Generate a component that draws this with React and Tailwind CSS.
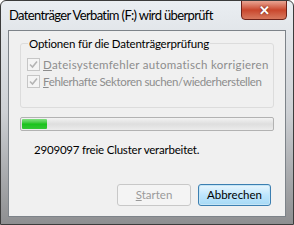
import React from "react";

function Check({ label, accel, track }) {
  return (
    <div className="flex items-center gap-[3px] h-[17px] whitespace-nowrap">
      <div className="w-[13px] h-[13px] border border-[#c6c6c6] bg-[#f4f4f4] flex items-center justify-center shrink-0">
        <svg width="9" height="9" viewBox="0 0 9 9">
          <path d="M1 4.5 L3.5 7 L8 1.5" fill="none" stroke="#b4b4b4" strokeWidth="1.6" />
        </svg>
      </div>
      <span className={"text-[#8d8d8d] " + track}>
        <span className="underline">{accel}</span>
        {label}
      </span>
    </div>
  );
}

export default function App() {
  return (
    <div
      className="w-[294px] h-[225px] overflow-hidden relative border border-[#3c3c3c] rounded-t-[6px] bg-gradient-to-b from-[#eaeef2] via-[#cdd0d4] to-[#8e8f91] flex flex-col"
      style={{ fontFamily: 'Lato, "Noto Sans", sans-serif' }}
    >
      {/* title bar */}
      <div className="h-[29px] flex items-center pl-[8px] pt-[1px] shrink-0 whitespace-nowrap">
        <span className="text-[13px] tracking-[-0.65px] text-black">
          Datenträger Verbatim (F:) wird überprüft
        </span>
      </div>
      {/* close button */}
      <div className="absolute right-[6px] top-[-1px] w-[46px] h-[20px] rounded-b-[4px] border border-[#6d2219] bg-gradient-to-b from-[#e8a493] via-[#c9462c] to-[#d7785e] flex items-center justify-center">
        <span className="text-white text-[13px] font-bold leading-none" style={{ textShadow: "0 0 2px #5a1a10" }}>
          ✕
        </span>
      </div>

      {/* client */}
      <div className="mx-[7px] mb-[7px] flex-1 border border-[#7d8389] bg-[#f0f0f0] text-[11.5px] text-black px-[11px] pt-[12px] flex flex-col whitespace-nowrap">
        <div className="relative border border-[#dcdcdc] rounded-[3px] h-[65px] px-[6px] pt-[12px]">
          <span className="absolute left-[7px] top-[-9px] bg-[#f0f0f0] px-[1px] tracking-[-0.2px]">
            Optionen für die Datenträgerprüfung
          </span>
          <Check accel="D" label="ateisystemfehler automatisch korrigieren" track="tracking-[0.3px]" />
          <Check accel="F" label="ehlerhafte Sektoren suchen/wiederherstellen" track="tracking-[-0.35px]" />
        </div>

        <div className="mt-[9px] h-[14px] rounded-[2px] border border-[#b2b2b2] bg-gradient-to-b from-[#f3f3f3] via-[#dedede] to-[#ececec] p-[1px] flex">
          <div className="w-[25px] h-full rounded-[1px] bg-gradient-to-b from-[#7fe07f] via-[#17c31a] to-[#33c634]" />
        </div>

        <div className="mt-[10px] pl-[14px] tracking-[-0.2px]">2909097 freie Cluster verarbeitet.</div>

        <div className="mt-auto mb-[10px] flex justify-end gap-[7px] pr-[3px]">
          <div className="w-[74px] h-[22px] rounded-[3px] border border-[#c8c8c8] bg-[#f4f4f4] flex items-center justify-center text-[#9a9a9a]">
            <span><span className="underline">S</span>tarten</span>
          </div>
          <div className="w-[73px] h-[22px] rounded-[3px] border border-[#3c7fb1] bg-gradient-to-b from-[#eaf6fd] via-[#bee6fd] to-[#a7d9f5] flex items-center justify-center shadow-[inset_0_0_0_1px_#c4e5f6]">
            Abbrechen
          </div>
        </div>
      </div>
    </div>
  );
}
